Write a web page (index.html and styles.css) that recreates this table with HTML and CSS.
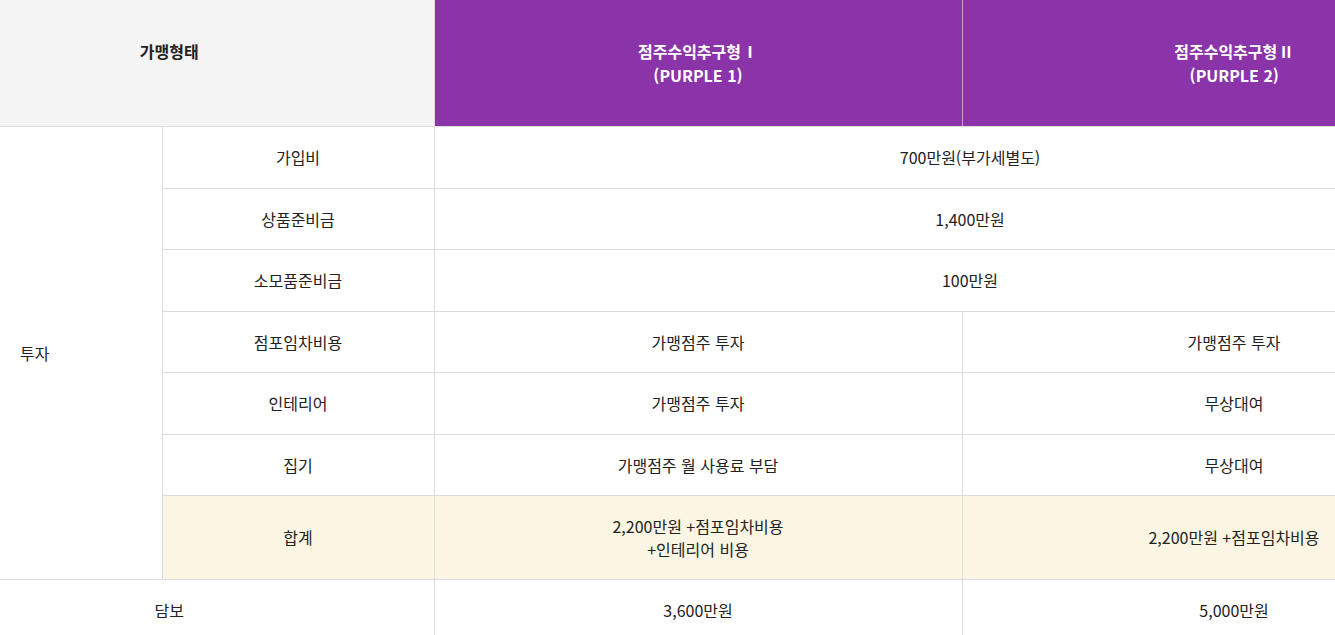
FILE: index.html
```html
<!DOCTYPE html>
<html lang="ko">
<head>
<meta charset="utf-8">
<title>가맹형태</title>
<link rel="stylesheet" href="styles.css">
</head>
<body>
<div class="wrap">
<table class="plan">
  <colgroup>
    <col class="c1">
    <col class="c2">
    <col class="c3">
    <col class="c4">
  </colgroup>
  <thead>
    <tr>
      <th colspan="2" class="th-type">가맹형태<br>&nbsp;</th>
      <th class="th-purple">점주수익추구형<span class="num">Ⅰ</span><br>(PURPLE 1)</th>
      <th class="th-purple th-sep">점주수익추구형<span class="num">Ⅱ</span><br>(PURPLE 2)</th>
    </tr>
  </thead>
  <tbody>
    <tr>
      <td rowspan="7" class="cat">투자</td>
      <td>가입비</td>
      <td colspan="2">700만원(부가세별도)</td>
    </tr>
    <tr>
      <td>상품준비금</td>
      <td colspan="2">1,400만원</td>
    </tr>
    <tr>
      <td>소모품준비금</td>
      <td colspan="2">100만원</td>
    </tr>
    <tr>
      <td>점포임차비용</td>
      <td>가맹점주 투자</td>
      <td>가맹점주 투자</td>
    </tr>
    <tr>
      <td>인테리어</td>
      <td>가맹점주 투자</td>
      <td>무상대여</td>
    </tr>
    <tr>
      <td>집기</td>
      <td>가맹점주 월 사용료 부담</td>
      <td>무상대여</td>
    </tr>
    <tr class="sum">
      <td>합계</td>
      <td>2,200만원 +점포임차비용<br>+인테리어 비용</td>
      <td>2,200만원 +점포임차비용</td>
    </tr>
    <tr>
      <td colspan="2" class="deposit">담보</td>
      <td>3,600만원</td>
      <td>5,000만원</td>
    </tr>
  </tbody>
</table>
</div>
</body>
</html>
```

FILE: styles.css
```css
html, body {
  margin: 0;
  padding: 0;
  background: #ffffff;
}

.wrap {
  width: 1506px;
}

.plan {
  width: 1506px;
  border-collapse: collapse;
  table-layout: fixed;
  font-family: "Noto Sans CJK KR", "Noto Sans", sans-serif;
  font-size: 16px;
  color: #222222;
}

.c1 { width: 162px; }
.c2 { width: 272px; }
.c3 { width: 528px; }
.c4 { width: 544px; }

.plan th,
.plan td {
  border: 1px solid #dcdcdc;
  text-align: center;
  vertical-align: middle;
}

.plan thead th {
  border-top: 0;
  padding: 39px 10px;
  line-height: 24px;
  font-weight: 700;
}

.plan th .num {
  margin-left: 1px;
}

.plan th.th-type {
  border-left: 0;
  background: #f4f4f4;
  color: #222222;
  padding-right: 105px;
}

.plan th.th-purple {
  background: #8b34a9;
  color: #ffffff;
  border-left: 0;
  border-right: 0;
}

.plan th.th-sep {
  border-left: 1px solid #c7a2d4;
}

.plan td {
  padding: 19px 10px;
  line-height: 22.5px;
}

.plan td.cat {
  text-align: left;
  padding-left: 20px;
  border-left: 0;
}

.plan td.deposit {
  border-left: 0;
  padding-right: 105px;
}

.plan tr.sum td {
  background: #fbf5e3;
}
```
